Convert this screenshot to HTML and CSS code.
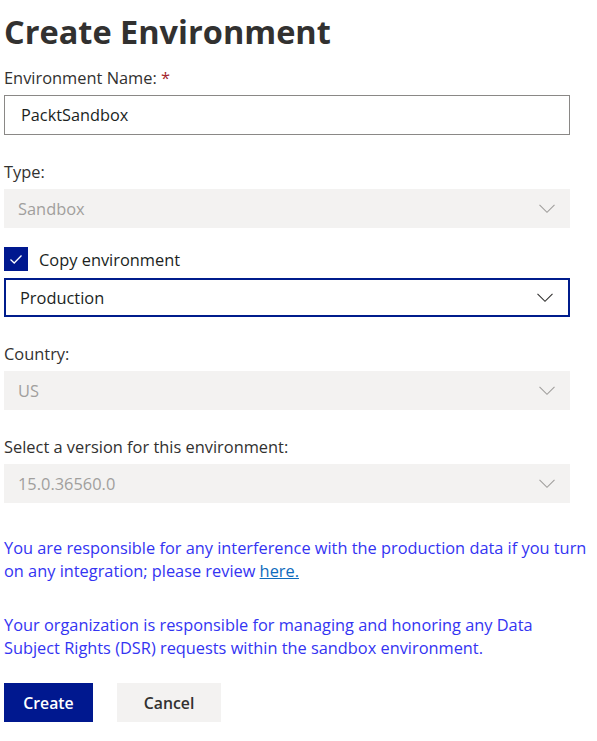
FILE: index.html
```html
<!DOCTYPE html>
<html lang="en">
<head>
<meta charset="utf-8">
<title>Create Environment</title>
<link rel="stylesheet" href="styles.css">
</head>
<body>
<main class="panel">
  <h1 class="title">Create Environment</h1>

  <div class="field field-first">
    <label class="label">Environment Name: <span class="req">*</span></label>
    <div class="input">PacktSandbox</div>
  </div>

  <div class="field">
    <label class="label">Type:</label>
    <div class="select disabled">
      <span>Sandbox</span>
      <svg class="chev" viewBox="0 0 16 10" width="16" height="10"><path d="M0.5 0.8 L8 8.3 L15.5 0.8" fill="none" stroke="currentColor" stroke-width="1.1"/></svg>
    </div>
  </div>

  <div class="check-row">
    <span class="checkbox">
      <svg viewBox="0 0 24 24" width="24" height="24"><path d="M6.5 12.5 L10.2 16 L17.5 8.5" fill="none" stroke="#fff" stroke-width="1.3"/></svg>
    </span>
    <span class="check-label">Copy environment</span>
  </div>
  <div class="select focused">
    <span>Production</span>
    <svg class="chev" viewBox="0 0 16 10" width="16" height="10"><path d="M0.5 0.8 L8 8.3 L15.5 0.8" fill="none" stroke="currentColor" stroke-width="1.1"/></svg>
  </div>

  <div class="field">
    <label class="label">Country:</label>
    <div class="select disabled">
      <span>US</span>
      <svg class="chev" viewBox="0 0 16 10" width="16" height="10"><path d="M0.5 0.8 L8 8.3 L15.5 0.8" fill="none" stroke="currentColor" stroke-width="1.1"/></svg>
    </div>
  </div>

  <div class="field">
    <label class="label">Select a version for this environment:</label>
    <div class="select disabled">
      <span>15.0.36560.0</span>
      <svg class="chev" viewBox="0 0 16 10" width="16" height="10"><path d="M0.5 0.8 L8 8.3 L15.5 0.8" fill="none" stroke="currentColor" stroke-width="1.1"/></svg>
    </div>
  </div>

  <p class="note note-first">You are responsible for any interference with the production data if you turn on any integration; please review <a class="link" href="#">here.</a></p>
  <p class="note note-narrow">Your organization is responsible for managing and honoring any Data Subject Rights (DSR) requests within the sandbox environment.</p>

  <div class="actions">
    <button class="btn primary">Create</button>
    <button class="btn secondary">Cancel</button>
  </div>
</main>
</body>
</html>
```
FILE: styles.css
```css
* { box-sizing: border-box; }
html, body { margin: 0; padding: 0; background: #fff; }
body {
  font-family: "Open Sans", "Noto Sans", "Liberation Sans", sans-serif;
  font-size: 16.4px;
  color: #323130;
}
.panel {
  padding: 12px 0 0 4px;
  width: 597px;
  display: flex;
  flex-direction: column;
}
.title {
  margin: 0;
  font-size: 32.5px;
  line-height: 40px;
  font-weight: 700;
  color: #323130;
  letter-spacing: 0;
}
.field { display: flex; flex-direction: column; margin-top: 27px; }
.field-first { margin-top: 16px; }
.label {
  line-height: 20px;
  height: 20px;
  margin-bottom: 7px;
  color: #323130;
}
.req { color: #a4262c; }
.input {
  width: 566px;
  height: 40px;
  border: 1px solid #8a8886;
  padding: 0 16px;
  display: flex;
  align-items: center;
  font-size: 16.3px;
  color: #201f1e;
}
.select {
  width: 566px;
  height: 39px;
  display: flex;
  align-items: center;
  justify-content: space-between;
  padding: 0 15px 0 14px;
}
.select.disabled { background: #f3f2f1; color: #a19f9d; }
.select.disabled .chev { color: #a19f9d; }
.select.focused {
  border: 2px solid #001c8c;
  padding-left: 14px;
  color: #201f1e;
  margin-top: 7px;
}
.select.focused .chev { color: #323130; }
.chev { display: block; }
.check-row {
  display: flex;
  align-items: center;
  margin-top: 19px;
  height: 24px;
}
.checkbox {
  width: 24px;
  height: 24px;
  background: #00188f;
  display: flex;
}
.check-label { margin-left: 11px; color: #201f1e; }
.note {
  margin: 31px 0 0 0;
  width: 593px;
  font-size: 16.35px;
  line-height: 23px;
  color: #3434f2;
}
.note-first { margin-top: 34px; }
.note-narrow { width: 560px; }
.link { color: #0f6cbd; text-decoration: underline; }
.actions { display: flex; gap: 24px; margin-top: 23px; }
.btn {
  height: 39px;
  border: 0;
  font-family: inherit;
  font-size: 15.8px;
  font-weight: 600;
  padding: 0;
}
.primary { width: 89px; background: #00188f; color: #fff; }
.secondary { width: 104px; background: #f3f2f1; color: #323130; }
```
